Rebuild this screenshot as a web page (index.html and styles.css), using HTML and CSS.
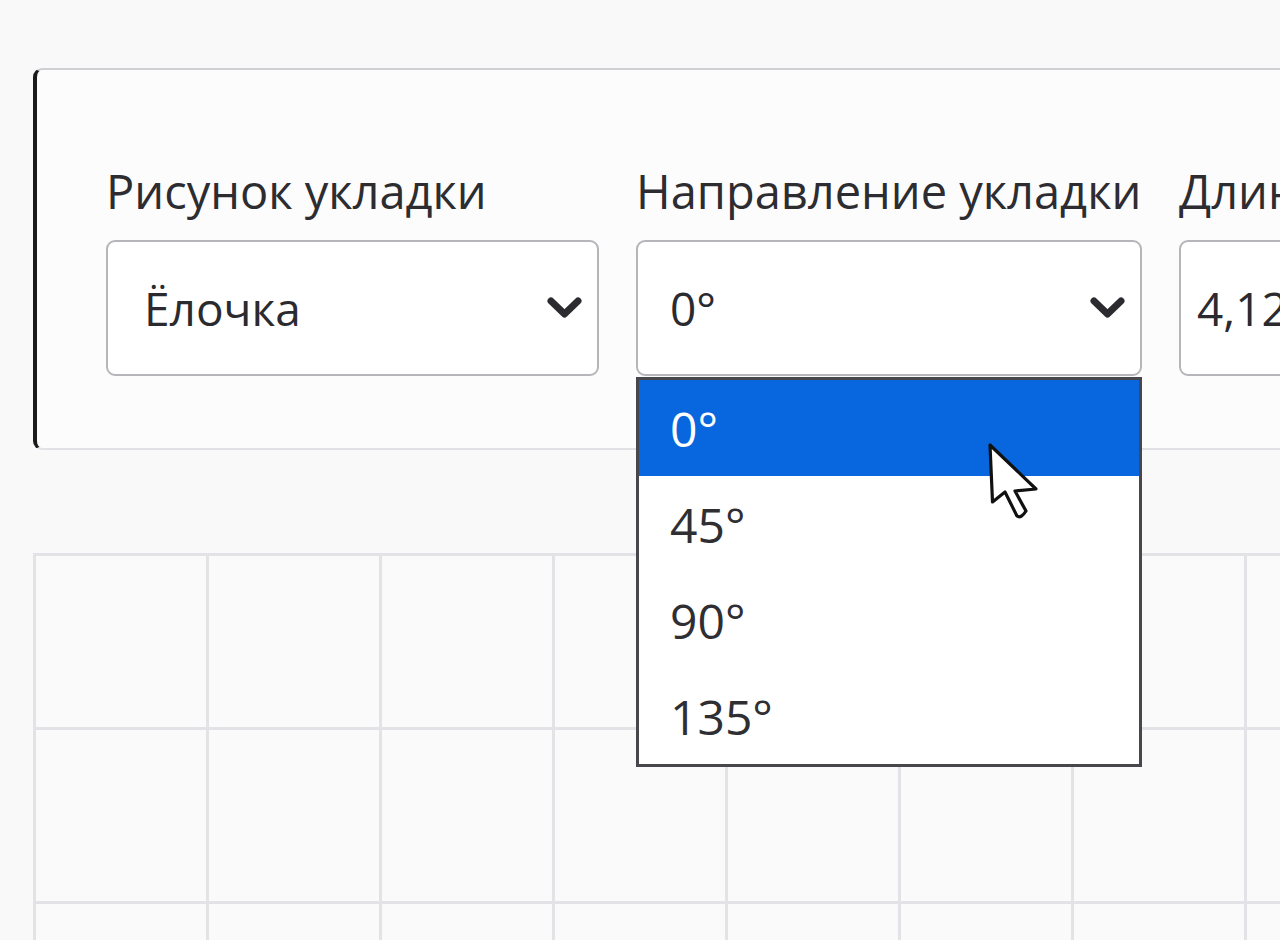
FILE: index.html
```html
<!DOCTYPE html>
<html lang="ru">
<head>
<meta charset="utf-8">
<title>Параметры укладки</title>
<link rel="stylesheet" href="styles.css">
</head>
<body>
<div class="page">
  <section class="card">
    <div class="fields">
      <div class="field">
        <div class="label">Рисунок укладки</div>
        <div class="select select-wide">
          <span class="value">Ёлочка</span>
          <svg class="chev" width="35" height="22" viewBox="0 0 35 22"><polyline points="4,4 17.5,17 31,4" fill="none" stroke="#2c2c30" stroke-width="7" stroke-linecap="round" stroke-linejoin="round"/></svg>
        </div>
      </div>
      <div class="field field-open">
        <div class="label">Направление укладки</div>
        <div class="select">
          <span class="value">0°</span>
          <svg class="chev" width="35" height="22" viewBox="0 0 35 22"><polyline points="4,4 17.5,17 31,4" fill="none" stroke="#2c2c30" stroke-width="7" stroke-linecap="round" stroke-linejoin="round"/></svg>
        </div>
        <ul class="menu">
          <li class="opt opt-active">0°</li>
          <li class="opt">45°</li>
          <li class="opt">90°</li>
          <li class="opt">135°</li>
        </ul>
        <svg class="cursor" width="54" height="80" viewBox="-3 -3 54 80"><path d="M0 0 L2.5 57 L15 47 L27 71 Q31 74 36 66 L25 46 L46 44 Z" fill="#ffffff" stroke="#111111" stroke-width="3.2" stroke-linejoin="round"/></svg>
      </div>
      <div class="field">
        <div class="label">Длина доски</div>
        <div class="select select-input">
          <span class="value">4,12</span>
        </div>
      </div>
    </div>
  </section>
  <div class="grid">
    <div class="cell"></div><div class="cell"></div><div class="cell"></div><div class="cell"></div><div class="cell"></div><div class="cell"></div><div class="cell"></div><div class="cell"></div>
    <div class="cell"></div><div class="cell"></div><div class="cell"></div><div class="cell"></div><div class="cell"></div><div class="cell"></div><div class="cell"></div><div class="cell"></div>
    <div class="cell"></div><div class="cell"></div><div class="cell"></div><div class="cell"></div><div class="cell"></div><div class="cell"></div><div class="cell"></div><div class="cell"></div>
  </div>
</div>
</body>
</html>
```

FILE: styles.css
```css
html, body {
  margin: 0;
  padding: 0;
  width: 1280px;
  height: 940px;
  overflow: hidden;
  background: #f9f9fa;
}

.page {
  width: 1600px;
  padding: 68px 0 0 33px;
  font-family: "Open Sans", "Noto Sans", sans-serif;
  color: #2b2b2f;
}

.card {
  box-sizing: border-box;
  height: 382px;
  border-top: 2px solid #cfcfd4;
  border-bottom: 2px solid #e2e2e6;
  border-left: 4px solid #1b1b1e;
  border-radius: 9px 0 0 9px;
  background: #fcfcfc;
  padding: 98px 0 0 69px;
}

.fields {
  display: grid;
  grid-template-columns: 493px 506px 500px;
  column-gap: 37px;
}

.field {
  position: relative;
}

.label {
  font-size: 47px;
  line-height: 47px;
  height: 47px;
  margin-bottom: 25px;
  white-space: nowrap;
  color: #2d2d31;
}

.select {
  box-sizing: border-box;
  height: 136px;
  border: 2px solid #b5b5ba;
  border-radius: 9px;
  background: #ffffff;
  display: flex;
  align-items: center;
  justify-content: space-between;
  padding: 0 15px 0 32px;
}

.select-wide {
  padding-left: 36px;
}

.select-input {
  padding-left: 16px;
}

.value {
  font-size: 46px;
  line-height: 1;
  color: #2b2b2f;
  white-space: nowrap;
}

.chev {
  display: block;
  flex: none;
}

.menu {
  position: absolute;
  left: 0;
  right: 0;
  top: calc(100% + 1px);
  margin: 0;
  padding: 0;
  list-style: none;
  background: #ffffff;
  border: 3px solid #47474c;
  z-index: 5;
}

.opt {
  height: 96px;
  display: flex;
  align-items: center;
  padding-left: 31px;
  font-size: 48px;
  color: #2f2f33;
}

.opt-active {
  background: #0866de;
  color: #ffffff;
}

.cursor {
  position: absolute;
  left: 351px;
  top: 274px;
  z-index: 6;
}

.grid {
  margin-top: 103px;
  display: grid;
  grid-template-columns: repeat(8, 170px);
  grid-auto-rows: 171px;
  gap: 3px;
  padding: 3px;
  background: #e3e3e7;
  width: max-content;
}

.cell {
  background: #fafafb;
}
```
